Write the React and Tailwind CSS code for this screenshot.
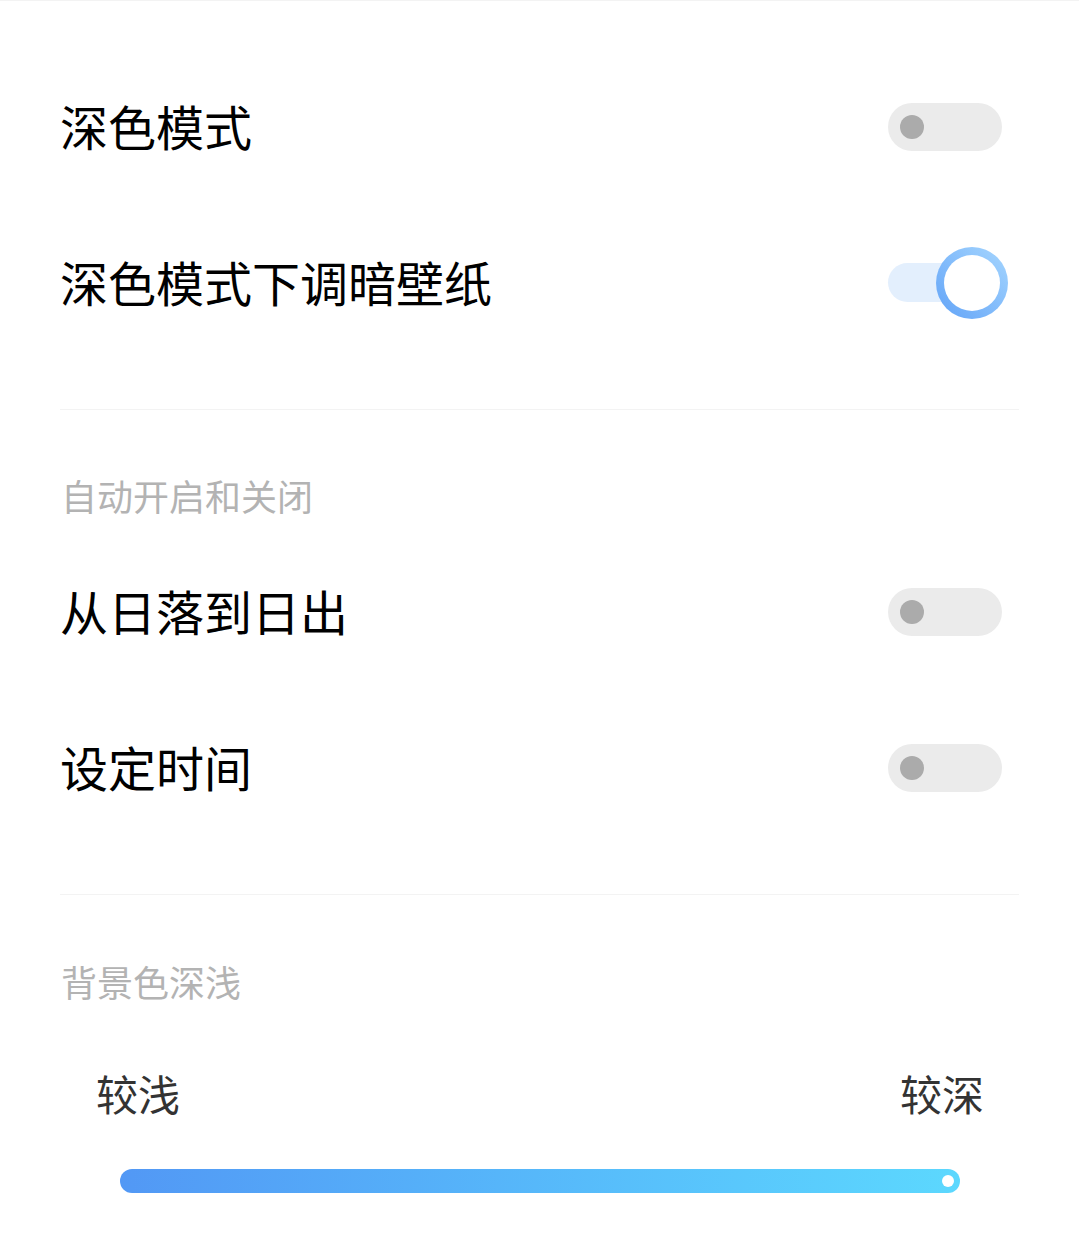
import React from "react";

const font = { fontFamily: '"Noto Sans CJK SC", "Noto Sans", sans-serif' };

function ToggleOff() {
  return (
    <div className="relative w-[114px] h-[48px] rounded-full bg-[#ebebeb] shrink-0">
      <div className="absolute left-[12px] top-[12px] w-[24px] h-[24px] rounded-full bg-[#ababab]" />
    </div>
  );
}

function ToggleOn() {
  return (
    <div className="relative w-[114px] h-[48px] shrink-0">
      <div className="absolute left-0 top-[4px] w-[84px] h-[39px] rounded-full bg-[#e3effd]" />
      <div className="absolute left-[48px] top-[-12px] w-[72px] h-[72px] rounded-full bg-gradient-to-tr from-[#62a3f7] to-[#a6d6fe] p-[8px]">
        <div className="w-full h-full rounded-full bg-white" />
      </div>
    </div>
  );
}

function Row({ title, on }) {
  return (
    <div className="h-[156px] flex items-center justify-between pl-[60px] pr-[77px]">
      <span className="text-[48px] leading-none text-black mb-[5px]">{title}</span>
      {on ? <ToggleOn /> : <ToggleOff />}
    </div>
  );
}

function Header({ title }) {
  return (
    <div className="h-[60px] flex items-center pl-[61px]">
      <span className="text-[36px] leading-none text-[#b3b3b3] mb-[4px]">{title}</span>
    </div>
  );
}

export default function App() {
  return (
    <div style={font} className="w-[1079px] h-[1241px] bg-white border-t border-[#f3f3f3] overflow-hidden">
      <div className="pt-[48px]">
        <Row title="深色模式" />
        <Row title="深色模式下调暗壁纸" on />
      </div>
      <div className="mt-[48px] mx-[60px] h-px bg-[#f3f3f3]" />
      <div className="mt-[57px]">
        <Header title="自动开启和关闭" />
      </div>
      <div className="mt-[7px]">
        <Row title="从日落到日出" />
        <Row title="设定时间" />
      </div>
      <div className="mt-[48px] mx-[60px] h-px bg-[#f3f3f3]" />
      <div className="mt-[58px]">
        <Header title="背景色深浅" />
      </div>
      <div className="mt-[52px] h-[60px] flex items-center justify-between pl-[96px] pr-[95px]">
        <span className="text-[42px] leading-none text-[#333333] mb-[4px]">较浅</span>
        <span className="text-[42px] leading-none text-[#333333] mb-[4px]">较深</span>
      </div>
      <div className="mt-[44px] mx-[120px] w-[840px] h-[24px] rounded-full bg-gradient-to-r from-[#5298f5] to-[#5cd8fe] flex items-center justify-end pr-[6px]">
        <div className="w-[12px] h-[12px] rounded-full bg-white" />
      </div>
    </div>
  );
}
